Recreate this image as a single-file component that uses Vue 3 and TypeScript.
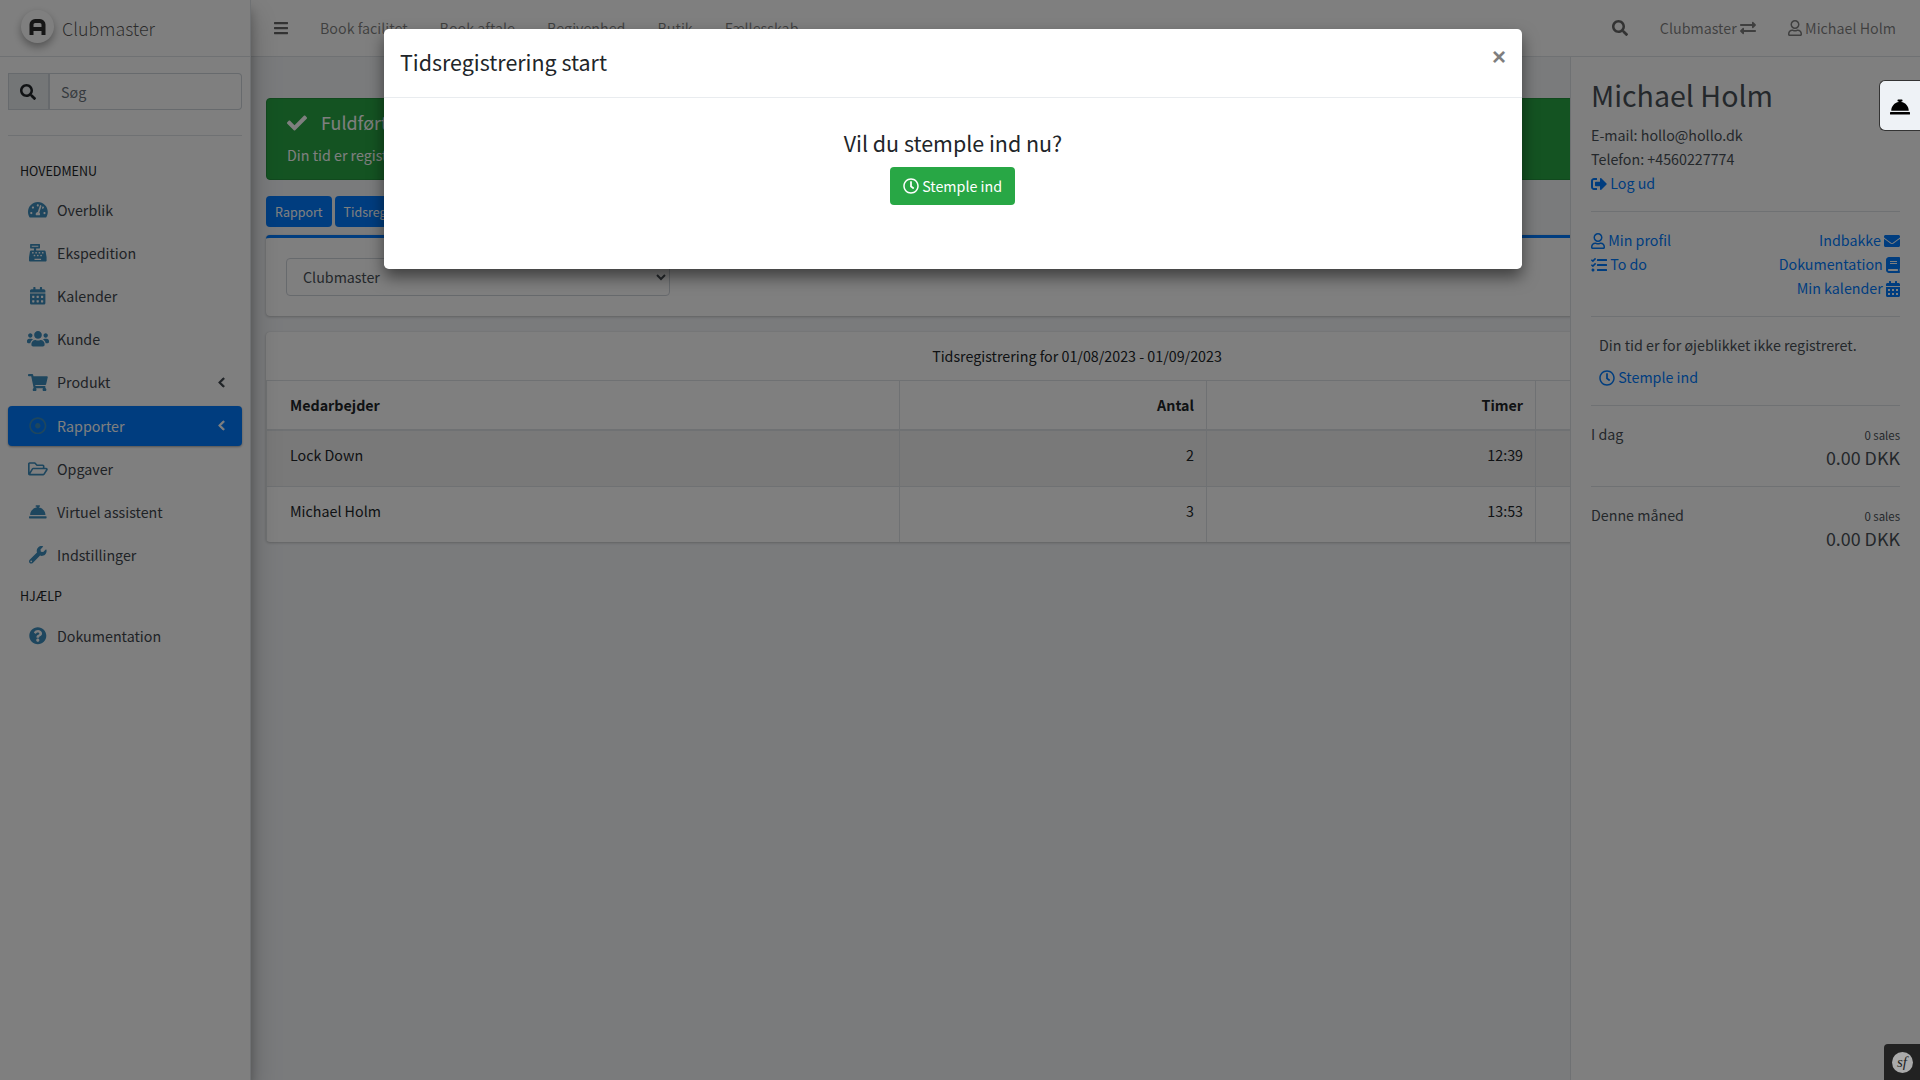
<script setup lang="ts">
import { h } from 'vue'

const I: Record<string, [number, string]> = {
  tach: [576, 'M288 32C128.94 32 0 160.94 0 320c0 52.8 14.25 102.26 39.06 144.8 5.61 9.62 16.3 15.2 27.44 15.2h443c11.14 0 21.83-5.58 27.44-15.2C561.75 422.26 576 372.8 576 320c0-159.06-128.94-288-288-288zm0 64c14.71 0 26.58 10.13 30.32 23.65-1.11 2.26-2.64 4.23-3.45 6.67l-9.22 27.67c-5.13 3.49-10.97 6.01-17.64 6.01-17.67 0-32-14.33-32-32S270.33 96 288 96zM96 384c-17.67 0-32-14.33-32-32s14.33-32 32-32 32 14.33 32 32-14.33 32-32 32zm48-160c-17.67 0-32-14.33-32-32s14.33-32 32-32 32 14.33 32 32-14.33 32-32 32zm246.77-72.41l-61.33 184C343.13 347.33 352 364.54 352 384c0 11.72-3.38 22.55-8.88 32H232.88c-5.5-9.45-8.88-20.28-8.88-32 0-33.94 26.5-61.43 59.9-63.59l61.34-184.01c4.17-12.56 17.73-19.45 30.36-15.17 12.57 4.19 19.35 17.79 15.17 30.36zm14.66 57.2l15.52-46.55c3.47-1.29 7.13-2.23 11.05-2.23 17.67 0 32 14.33 32 32s-14.33 32-32 32c-11.38-.01-20.89-6.28-26.57-15.22zM480 384c-17.67 0-32-14.33-32-32s14.33-32 32-32 32 14.33 32 32-14.33 32-32 32z'],
  cash: [512, 'M511.1 378.8l-26.7-160c-2.6-15.4-15.9-26.7-31.6-26.7H208v-64h96c8.8 0 16-7.2 16-16V16c0-8.8-7.2-16-16-16H48c-8.8 0-16 7.2-16 16v96c0 8.8 7.2 16 16 16h96v64H59.1c-15.6 0-29 11.3-31.6 26.7L.8 378.7c-.6 3.5-.9 7-.9 10.5V480c0 17.7 14.3 32 32 32h448c17.7 0 32-14.3 32-32v-90.7c.1-3.5-.2-7-.8-10.5zM280 248c0-8.8 7.2-16 16-16h16c8.8 0 16 7.2 16 16v16c0 8.8-7.2 16-16 16h-16c-8.8 0-16-7.2-16-16v-16zm-32 64h16c8.8 0 16 7.2 16 16v16c0 8.8-7.2 16-16 16h-16c-8.8 0-16-7.2-16-16v-16c0-8.8 7.2-16 16-16zm-32-80c8.8 0 16 7.2 16 16v16c0 8.8-7.2 16-16 16h-16c-8.8 0-16-7.2-16-16v-16c0-8.8 7.2-16 16-16h16zM80 80V48h192v32H80zm40 200h-16c-8.8 0-16-7.2-16-16v-16c0-8.8 7.2-16 16-16h16c8.8 0 16 7.2 16 16v16c0 8.8-7.2 16-16 16zm16 64v-16c0-8.8 7.2-16 16-16h16c8.8 0 16 7.2 16 16v16c0 8.8-7.2 16-16 16h-16c-8.8 0-16-7.2-16-16zm216 112c0 4.4-3.6 8-8 8H168c-4.4 0-8-3.6-8-8v-16c0-4.4 3.6-8 8-8h176c4.4 0 8 3.6 8 8v16zm24-112c0 8.8-7.2 16-16 16h-16c-8.8 0-16-7.2-16-16v-16c0-8.8 7.2-16 16-16h16c8.8 0 16 7.2 16 16v16zm48-80c0 8.8-7.2 16-16 16h-16c-8.8 0-16-7.2-16-16v-16c0-8.8 7.2-16 16-16h16c8.8 0 16 7.2 16 16v16z'],
  cal: [448, 'M0 464c0 26.5 21.5 48 48 48h352c26.5 0 48-21.5 48-48V192H0v272zm320-196c0-6.6 5.4-12 12-12h40c6.6 0 12 5.4 12 12v40c0 6.6-5.4 12-12 12h-40c-6.6 0-12-5.4-12-12v-40zm0 128c0-6.6 5.4-12 12-12h40c6.6 0 12 5.4 12 12v40c0 6.6-5.4 12-12 12h-40c-6.6 0-12-5.4-12-12v-40zM192 268c0-6.6 5.4-12 12-12h40c6.6 0 12 5.4 12 12v40c0 6.6-5.4 12-12 12h-40c-6.6 0-12-5.4-12-12v-40zm0 128c0-6.6 5.4-12 12-12h40c6.6 0 12 5.4 12 12v40c0 6.6-5.4 12-12 12h-40c-6.6 0-12-5.4-12-12v-40zM64 268c0-6.6 5.4-12 12-12h40c6.6 0 12 5.4 12 12v40c0 6.6-5.4 12-12 12H76c-6.6 0-12-5.4-12-12v-40zm0 128c0-6.6 5.4-12 12-12h40c6.6 0 12 5.4 12 12v40c0 6.6-5.4 12-12 12H76c-6.6 0-12-5.4-12-12v-40zM400 64h-48V16c0-8.8-7.2-16-16-16h-32c-8.8 0-16 7.2-16 16v48H160V16c0-8.8-7.2-16-16-16h-32c-8.8 0-16 7.2-16 16v48H48C21.5 64 0 85.5 0 112v48h448v-48c0-26.5-21.5-48-48-48z'],
  users: [640, 'M96 224c35.3 0 64-28.7 64-64s-28.7-64-64-64-64 28.7-64 64 28.7 64 64 64zm448 0c35.3 0 64-28.7 64-64s-28.7-64-64-64-64 28.7-64 64 28.7 64 64 64zm32 32h-64c-17.6 0-33.5 7.1-45.1 18.6 40.3 22.1 68.9 62 75.1 109.4h66c17.7 0 32-14.3 32-32v-32c0-35.3-28.7-64-64-64zm-256 0c61.9 0 112-50.1 112-112S381.9 32 320 32 208 82.1 208 144s50.1 112 112 112zm76.8 32h-8.3c-20.8 10-43.9 16-68.5 16s-47.6-6-68.5-16h-8.3C179.6 288 128 339.6 128 403.2V432c0 26.5 21.5 48 48 48h288c26.5 0 48-21.5 48-48v-28.8c0-63.6-51.6-115.2-115.2-115.2zm-223.7-13.4C161.5 263.1 145.6 256 128 256H64c-35.3 0-64 28.7-64 64v32c0 17.7 14.3 32 32 32h65.9c6.3-47.4 34.9-87.3 75.2-109.4z'],
  cart: [576, 'M528.12 301.319l47.273-208C578.806 78.301 567.391 64 551.99 64H159.208l-9.166-44.81C147.758 8.021 137.93 0 126.529 0H24C10.745 0 0 10.745 0 24v16c0 13.255 10.745 24 24 24h69.883l70.248 343.435C147.325 417.1 136 435.222 136 456c0 30.928 25.072 56 56 56s56-25.072 56-56c0-15.674-6.447-29.835-16.824-40h209.647C430.447 426.165 424 440.326 424 456c0 30.928 25.072 56 56 56s56-25.072 56-56c0-22.172-12.888-41.332-31.579-50.405l5.517-24.276c3.413-15.018-8.002-29.319-23.403-29.319H218.117l-6.545-32h293.145c11.206 0 20.92-7.754 23.403-18.681z'],
  dot: [512, 'M256 56c110.532 0 200 89.451 200 200 0 110.532-89.451 200-200 200-110.532 0-200-89.451-200-200 0-110.532 89.451-200 200-200m0-48C119.033 8 8 119.033 8 256s111.033 248 248 248 248-111.033 248-248S392.967 8 256 8zm0 168c-44.183 0-80 35.817-80 80s35.817 80 80 80 80-35.817 80-80-35.817-80-80-80z'],
  folder: [576, 'M527.9 224H480v-48c0-26.5-21.5-48-48-48H272l-64-64H48C21.5 64 0 85.5 0 112v288c0 26.5 21.5 48 48 48h400c16.5 0 31.9-8.5 40.7-22.6l79.9-128c20-31.9-3-73.4-40.7-73.4zM48 118c0-3.3 2.7-6 6-6h134.1l64 64H426c3.3 0 6 2.7 6 6v42H152c-16.8 0-32.4 8.8-41.1 23.2L48 351.4zm400 282H72l77.2-128H528z'],
  bell: [512, 'M288 130.54V112h16c8.84 0 16-7.16 16-16V80c0-8.84-7.16-16-16-16h-96c-8.84 0-16 7.16-16 16v16c0 8.84 7.16 16 16 16h16v18.54C115.49 146.11 32 239.18 32 352h448c0-112.82-83.49-205.89-192-221.46zM496 384H16c-8.84 0-16 7.16-16 16v32c0 8.84 7.16 16 16 16h480c8.84 0 16-7.16 16-16v-32c0-8.84-7.16-16-16-16z'],
  wrench: [512, 'M507.73 109.1c-2.24-9.03-13.54-12.09-20.12-5.51l-74.36 74.36-67.88-11.31-11.31-67.88 74.36-74.36c6.62-6.62 3.43-17.9-5.66-20.16-47.38-11.74-99.55.91-136.58 37.93-39.64 39.64-50.55 97.1-34.05 147.2L18.74 402.76c-24.99 24.99-24.99 65.51 0 90.5 24.99 24.99 65.51 24.99 90.5 0l213.21-213.21c50.12 16.71 107.47 5.68 147.37-34.22 37.07-37.07 49.7-89.32 37.91-136.73zM64 472c-13.25 0-24-10.75-24-24 0-13.26 10.75-24 24-24s24 10.74 24 24c0 13.25-10.75 24-24 24z'],
  help: [512, 'M504 256c0 136.997-111.043 248-248 248S8 392.997 8 256C8 119.083 119.043 8 256 8s248 111.083 248 248zM262.655 90c-54.497 0-89.255 22.957-116.549 63.758-3.536 5.286-2.353 12.415 2.715 16.258l34.699 26.31c5.205 3.947 12.621 3.008 16.665-2.122 17.864-22.658 30.113-35.797 57.303-35.797 20.429 0 45.698 13.148 45.698 32.958 0 14.976-12.363 22.667-32.534 33.976C247.128 238.528 216 254.941 216 296v4c0 6.627 5.373 12 12 12h56c6.627 0 12-5.373 12-12v-1.333c0-28.462 83.186-29.647 83.186-106.667 0-58.002-60.165-102-116.531-102zM256 338c-25.365 0-46 20.635-46 46 0 25.364 20.635 46 46 46s46-20.636 46-46c0-25.365-20.635-46-46-46z'],
  left: [320, 'M34.52 239.03L228.87 44.69c9.37-9.37 24.57-9.37 33.94 0l22.67 22.67c9.36 9.36 9.37 24.52.04 33.9L131.49 256l154.02 154.75c9.34 9.38 9.32 24.54-.04 33.9l-22.67 22.67c-9.37 9.37-24.57 9.37-33.94 0L34.52 272.97c-9.37-9.37-9.37-24.57 0-33.94z'],
  check: [512, 'M173.898 439.404l-166.4-166.4c-9.997-9.997-9.997-26.206 0-36.204l36.203-36.204c9.997-9.998 26.207-9.998 36.204 0L192 312.69 432.095 72.596c9.997-9.997 26.207-9.997 36.204 0l36.203 36.204c9.997 9.997 9.997 26.206 0 36.204l-294.4 294.401c-9.998 9.997-26.207 9.997-36.204-.001z'],
  search: [512, 'M505 442.7L405.3 343c-4.5-4.5-10.6-7-17-7H372c27.6-35.3 44-79.7 44-128C416 93.1 322.9 0 208 0S0 93.1 0 208s93.1 208 208 208c48.3 0 92.7-16.4 128-44v16.3c0 6.4 2.5 12.5 7 17l99.7 99.7c9.4 9.4 24.6 9.4 33.9 0l28.3-28.3c9.4-9.4 9.4-24.6.1-34zM208 336c-70.7 0-128-57.2-128-128 0-70.7 57.2-128 128-128 70.7 0 128 57.2 128 128 0 70.7-57.2 128-128 128z'],
  bars: [448, 'M16 132h416c8.837 0 16-7.163 16-16V76c0-8.837-7.163-16-16-16H16C7.163 60 0 67.163 0 76v40c0 8.837 7.163 16 16 16zm0 160h416c8.837 0 16-7.163 16-16v-40c0-8.837-7.163-16-16-16H16c-8.837 0-16 7.163-16 16v40c0 8.837 7.163 16 16 16zm0 160h416c8.837 0 16-7.163 16-16v-40c0-8.837-7.163-16-16-16H16c-8.837 0-16 7.163-16 16v40c0 8.837 7.163 16 16 16z'],
  swap: [512, 'M0 168v-16c0-13.255 10.745-24 24-24h360V80c0-21.367 25.899-32.042 40.971-16.971l80 80c9.372 9.373 9.372 24.569 0 33.941l-80 80C409.956 271.982 384 261.456 384 240v-48H24c-13.255 0-24-10.745-24-24zm488 152H128v-48c0-21.314-25.862-32.08-40.971-16.971l-80 80c-9.372 9.373-9.372 24.569 0 33.941l80 80C102.057 463.997 128 453.437 128 432v-48h360c13.255 0 24-10.745 24-24v-16c0-13.255-10.745-24-24-24z'],
  user: [448, 'M313.6 304c-28.7 0-42.5 16-89.6 16-47.1 0-60.8-16-89.6-16C60.2 304 0 364.2 0 438.4V464c0 26.5 21.5 48 48 48h352c26.5 0 48-21.5 48-48v-25.6c0-74.2-60.2-134.4-134.4-134.4zM400 464H48v-25.6c0-47.6 38.8-86.4 86.4-86.4 14.6 0 38.3 16 89.6 16 51.7 0 74.9-16 89.6-16 47.6 0 86.4 38.8 86.4 86.4V464zM224 288c79.5 0 144-64.5 144-144S303.5 0 224 0 80 64.5 80 144s64.5 144 144 144zm0-240c52.9 0 96 43.1 96 96s-43.1 96-96 96-96-43.1-96-96 43.1-96 96-96z'],
  out: [512, 'M497 273L329 441c-15 15-41 4.5-41-17v-96H152c-13.3 0-24-10.7-24-24v-96c0-13.3 10.7-24 24-24h136V88c0-21.4 25.9-32 41-17l168 168c9.3 9.4 9.3 24.6 0 34zM192 436v-40c0-6.6-5.4-12-12-12H96c-17.7 0-32-14.3-32-32V160c0-17.7 14.3-32 32-32h84c6.6 0 12-5.4 12-12V76c0-6.6-5.4-12-12-12H96c-53 0-96 43-96 96v192c0 53 43 96 96 96h84c6.6 0 12-5.4 12-12z'],
  mail: [512, 'M502.3 190.8c3.9-3.1 9.7-.2 9.7 4.7V400c0 26.5-21.5 48-48 48H48c-26.5 0-48-21.5-48-48V195.6c0-5 5.7-7.8 9.7-4.7 22.4 17.4 52.1 39.5 154.1 113.6 21.1 15.4 56.7 47.8 92.2 47.6 35.7.3 72-32.8 92.3-47.6 102-74.1 131.6-96.3 154-113.7zM256 320c23.2.4 56.6-29.2 73.4-41.4 132.7-96.3 142.8-104.7 173.4-128.7 5.8-4.5 9.2-11.5 9.2-18.9v-19c0-26.5-21.5-48-48-48H48C21.5 64 0 85.5 0 112v19c0 7.4 3.4 14.3 9.2 18.9 30.6 23.9 40.7 32.4 173.4 128.7 16.8 12.2 50.2 41.8 73.4 41.4z'],
  book: [448, 'M448 360V24c0-13.3-10.7-24-24-24H96C43 0 0 43 0 96v320c0 53 43 96 96 96h328c13.3 0 24-10.7 24-24v-16c0-7.5-3.5-14.3-8.9-18.7-4.2-15.4-4.2-59.3 0-74.7 5.4-4.3 8.9-11.1 8.9-18.6zM128 134c0-3.3 2.7-6 6-6h212c3.3 0 6 2.7 6 6v20c0 3.3-2.7 6-6 6H134c-3.3 0-6-2.7-6-6v-20zm0 64c0-3.3 2.7-6 6-6h212c3.3 0 6 2.7 6 6v20c0 3.3-2.7 6-6 6H134c-3.3 0-6-2.7-6-6v-20zm253.4 250H96c-17.7 0-32-14.3-32-32 0-17.6 14.4-32 32-32h285.4c-1.9 17.1-1.9 46.9 0 64z'],
  tasks: [512, 'M139.61 35.5a12 12 0 0 0-17 0L58.93 98.81l-22.7-22.12a12 12 0 0 0-17 0L3.53 92.41a12 12 0 0 0 0 17l47.59 47.4a12.78 12.78 0 0 0 17.61 0l15.59-15.62L156.52 69a12.09 12.09 0 0 0 .09-17zm0 159.19a12 12 0 0 0-17 0l-63.68 63.72-22.7-22.1a12 12 0 0 0-17 0L3.53 252a12 12 0 0 0 0 17L51 316.5a12.77 12.77 0 0 0 17.6 0l15.7-15.69 72.2-72.22a12 12 0 0 0 .09-16.9zM64 368c-26.49 0-48.59 21.5-48.59 48S37.53 464 64 464a48 48 0 0 0 0-96zm432 16H208a16 16 0 0 0-16 16v32a16 16 0 0 0 16 16h288a16 16 0 0 0 16-16v-32a16 16 0 0 0-16-16zm0-320H208a16 16 0 0 0-16 16v32a16 16 0 0 0 16 16h288a16 16 0 0 0 16-16V80a16 16 0 0 0-16-16zm0 160H208a16 16 0 0 0-16 16v32a16 16 0 0 0 16 16h288a16 16 0 0 0 16-16v-32a16 16 0 0 0-16-16z'],
  clock: [512, 'M256 8C119 8 8 119 8 256s111 248 248 248 248-111 248-248S393 8 256 8zm0 448c-110.5 0-200-89.5-200-200S145.5 56 256 56s200 89.5 200 200-89.5 200-200 200zm61.8-104.4l-84.9-61.7c-3.1-2.3-4.9-5.9-4.9-9.7V116c0-6.6 5.4-12 12-12h32c6.6 0 12 5.4 12 12v141.7l66.8 48.6c5.4 3.9 6.5 11.4 2.6 16.8L334.6 349c-3.9 5.3-11.4 6.5-16.8 2.6z'],
}

const Ic = (props: { n: string }) =>
  h('svg', { viewBox: `0 0 ${I[props.n][0]} 512`, fill: 'currentColor', class: 'ic' }, [h('path', { d: I[props.n][1] })])
Ic.props = ['n']

const mainMenu = [
  { label: 'Overblik', icon: 'tach' },
  { label: 'Ekspedition', icon: 'cash' },
  { label: 'Kalender', icon: 'cal' },
  { label: 'Kunde', icon: 'users' },
  { label: 'Produkt', icon: 'cart', arrow: true },
  { label: 'Rapporter', icon: 'dot', arrow: true, active: true },
  { label: 'Opgaver', icon: 'folder' },
  { label: 'Virtuel assistent', icon: 'bell' },
  { label: 'Indstillinger', icon: 'wrench' },
]
const topLinks = ['Book facilitet', 'Book aftale', 'Begivenhed', 'Butik', 'Fællesskab']
const rows = [
  { name: 'Lock Down', count: 2, hours: '12:39' },
  { name: 'Michael Holm', count: 3, hours: '13:53' },
]
const stats = ['I dag', 'Denne måned']
</script>

<template>
  <div class="page">
    <aside class="sidebar">
      <div class="brand">
        <span class="logo">
          <svg viewBox="0 0 20 20" width="17" height="16"><path d="M2.5 20V7a4.5 4.5 0 0 1 4.5-4.5h6A4.5 4.5 0 0 1 17.5 7v13M2.5 12.5h15" fill="none" stroke="#2c2c2c" stroke-width="5"/></svg>
        </span>
        <span class="brand-text">Clubmaster</span>
      </div>
      <div class="search">
        <span class="search-btn"><Ic n="search" /></span>
        <input class="search-input" placeholder="Søg" />
      </div>
      <nav class="menu">
        <div class="menu-head">HOVEDMENU</div>
        <a v-for="m in mainMenu" :key="m.label" class="item" :class="{ active: m.active }">
          <span class="item-ic"><Ic :n="m.icon" /></span>
          <span>{{ m.label }}</span>
          <span v-if="m.arrow" class="arrow"><Ic n="left" /></span>
        </a>
        <div class="menu-head">HJÆLP</div>
        <a class="item help"><span class="item-ic"><Ic n="help" /></span><span>Dokumentation</span></a>
      </nav>
    </aside>

    <div class="main">
      <header class="topbar">
        <span class="burger"><Ic n="bars" /></span>
        <a v-for="t in topLinks" :key="t" class="top-link">{{ t }}</a>
        <div class="top-right">
          <span class="top-search"><Ic n="search" /></span>
          <a class="top-club">Clubmaster <Ic n="swap" /></a>
          <a class="top-user"><Ic n="user" /> Michael Holm</a>
        </div>
      </header>

      <div class="below">
        <main class="content">
          <div class="content-inner">
            <div class="alert">
              <h5><Ic n="check" />Fuldført</h5>
              <p>Din tid er registreret</p>
            </div>
            <div class="tabs">
              <a class="tab">Rapport</a>
              <a class="tab">Tidsregistrering</a>
            </div>
            <section class="card filter">
              <select class="select"><option>Clubmaster</option></select>
            </section>
            <section class="card report">
              <div class="caption">Tidsregistrering for 01/08/2023 - 01/09/2023</div>
              <table>
                <colgroup>
                  <col class="c1" /><col class="c2" /><col class="c3" /><col />
                </colgroup>
                <thead>
                  <tr><th>Medarbejder</th><th class="num">Antal</th><th class="num">Timer</th><th></th></tr>
                </thead>
                <tbody>
                  <tr v-for="r in rows" :key="r.name">
                    <td>{{ r.name }}</td>
                    <td class="num">{{ r.count }}</td>
                    <td class="num">{{ r.hours }}</td>
                    <td></td>
                  </tr>
                </tbody>
              </table>
            </section>
          </div>
        </main>

        <aside class="panel">
          <h3 class="who">Michael Holm</h3>
          <div>E-mail: hollo@hollo.dk</div>
          <div>Telefon: +4560227774</div>
          <a class="link"><Ic n="out" /> Log ud</a>
          <hr />
          <div class="links">
            <div class="col">
              <a class="link"><Ic n="user" /> Min profil</a>
              <a class="link"><Ic n="tasks" /> To do</a>
            </div>
            <div class="col end">
              <a class="link">Indbakke <Ic n="mail" /></a>
              <a class="link">Dokumentation <Ic n="book" /></a>
              <a class="link">Min kalender <Ic n="cal" /></a>
            </div>
          </div>
          <hr />
          <div class="reg">
            <p>Din tid er for øjeblikket ikke registreret.</p>
            <a class="link"><Ic n="clock" /> Stemple ind</a>
          </div>
          <template v-for="s in stats" :key="s">
            <hr />
            <div class="stat">
              <div class="stat-top"><span>{{ s }}</span><small>0 sales</small></div>
              <div class="stat-val">0.00 DKK</div>
            </div>
          </template>
        </aside>
      </div>
    </div>

    <div class="backdrop"></div>
    <div class="modal-wrap">
      <div class="modal">
        <div class="modal-head">
          <h4>Tidsregistrering start</h4>
          <span class="close">×</span>
        </div>
        <div class="modal-body">
          <h4>Vil du stemple ind nu?</h4>
          <button class="btn-ok"><Ic n="clock" /> Stemple ind</button>
        </div>
      </div>
    </div>

    <div class="bell"><Ic n="bell" /></div>
    <div class="sf"><span class="sf-dot">sf</span></div>
  </div>
</template>

<style>
html, body { margin: 0; padding: 0; overflow: hidden; }
</style>

<style scoped>
.page {
  --k: 0.893;
  position: relative;
  width: 1920px;
  height: 1080px;
  overflow: hidden;
  display: flex;
  background: #f4f6f9;
  color: #212529;
  font-family: "Noto Sans CJK JP", "Noto Sans", sans-serif;
  font-size: calc(16px * var(--k));
  line-height: 24px;
}
.ic { height: calc(1em / var(--k)); width: auto; vertical-align: -0.15em; }
a { text-decoration: none; }

.sidebar {
  width: 250px;
  flex: none;
  background: #fff;
  box-shadow: 0 14px 28px rgba(0,0,0,.25), 0 10px 10px rgba(0,0,0,.22);
  position: relative;
  z-index: 2;
  border-right: 1px solid #dee2e6;
  box-sizing: content-box;
}
.brand {
  height: 56px;
  display: flex;
  align-items: center;
  border-bottom: 1px solid #dee2e6;
  padding-left: 21px;
  gap: 8px;
}
.logo {
  width: 33px;
  height: 33px;
  border-radius: 50%;
  background: #fff;
  display: flex;
  align-items: center;
  justify-content: center;
  box-shadow: 0 4px 8px rgba(0,0,0,.35);
  margin-top: -3px;
}
.brand-text { font-size: calc(20px * var(--k)); color: rgba(0,0,0,.68); font-weight: 300; }
.search {
  margin: 16px 8px 0;
  height: 37px;
  display: flex;
}
.search-btn {
  width: 42px;
  flex: none;
  background: #e9ecef;
  border: 1px solid #ced4da;
  border-right-width: 2px;
  padding-right: 1px;
  display: flex;
  align-items: center;
  justify-content: center;
  box-sizing: border-box;
  color: #212529;
}
.search-input {
  flex: 1;
  min-width: 0;
  border: 1px solid #ced4da;
  border-left: 0;
  border-radius: 0 4px 4px 0;
  padding: 0 11px;
  font: inherit;
  background: #fff;
  outline: none;
}
.search-input::placeholder { color: #6c757d; }
.menu {
  margin: 25px 8px 0;
  padding-top: 16.7px;
  border-top: 1px solid #dee2e6;
}
.menu-head {
  height: 37px;
  line-height: 36px;
  padding-left: 12px;
  font-size: calc(14px * var(--k));
  color: #212529;
}
.item {
  height: 40px;
  margin-bottom: 3.2px;
  display: flex;
  align-items: center;
  border-radius: 4px;
  color: #3f464d;
  padding-left: 16px;
  padding-right: 16px;
  position: relative;
}
.item.help { margin-top: 0.5px; }
.item-ic {
  width: 28px;
  margin-right: 5px;
  flex: none;
  color: #3c8dbc;
  display: flex;
  justify-content: center;
}
.item-ic .ic { height: 17.6px; }
.item.active {
  background: #007bff;
  color: #fff;
  box-shadow: 0 1px 3px rgba(0,0,0,.12), 0 1px 2px rgba(0,0,0,.24);
}
.arrow { margin-left: auto; display: flex; margin-right: 1px; }
.arrow .ic { height: 11px; stroke: currentColor; stroke-width: 36; }

.main { flex: 1; min-width: 0; display: flex; flex-direction: column; }
.topbar {
  height: 57px;
  box-sizing: border-box;
  flex: none;
  background: #fff;
  border-bottom: 1px solid #dee2e6;
  display: flex;
  align-items: center;
  color: rgba(0,0,0,.5);
}
.burger { width: 53px; flex: none; display: flex; padding-left: 23px; box-sizing: border-box; color: rgba(0,0,0,.6); }
.top-link { padding: 0 16px; color: rgba(0,0,0,.5); }
.top-right { margin-left: auto; display: flex; align-items: center; padding-right: 24px; }
.top-search { margin-right: 32px; display: flex; color: rgba(0,0,0,.6); }
.top-club { margin-right: 32px; color: rgba(0,0,0,.5); }
.top-user { color: rgba(0,0,0,.5); }

.below { flex: 1; min-height: 0; display: flex; }
.content { flex: 1; min-width: 0; overflow: hidden; }
.content-inner { width: 1622px; margin-left: 15px; padding-top: 41px; }

.alert {
  background: #28a745;
  color: #fff;
  border: 1px solid #23923d;
  border-radius: 4px;
  padding: 11px 20px 12px;
  height: 82px;
  box-sizing: border-box;
}
.alert h5 { margin: 0 0 9px; font-size: calc(20px * var(--k)); font-weight: 400; line-height: 24px; }
.alert h5 .ic { margin-right: 14px; height: 20px; vertical-align: -3px; }
.alert p { margin: 0; }

.tabs { display: flex; gap: 3px; margin-top: 16px; }
.tab {
  height: 31px;
  padding: 0 9px;
  line-height: 31px;
  font-size: calc(14px * var(--k));
  background: #007bff;
  color: #fff;
  border-radius: 4px;
}
.card {
  background: #fff;
  border-radius: 4px;
  box-shadow: 0 0 1px rgba(0,0,0,.125), 0 1px 3px rgba(0,0,0,.2);
}
.filter {
  margin-top: 8px;
  border-top: 3px solid #007bff;
  padding: 20px;
  height: 81px;
  box-sizing: border-box;
}
.select {
  width: 384px;
  height: 38px;
  padding: 5px 12px 6px;
  font: inherit;
  color: #495057;
  background: #fff;
  border: 1px solid #ced4da;
  border-radius: 4px;
}
.report { margin-top: 16px; }
.caption { height: 48px; line-height: 48px; text-align: center; }
table { border-collapse: collapse; width: 100%; table-layout: fixed; }
.c1 { width: 633px; }
.c2 { width: 307px; }
.c3 { width: 329px; }
th, td {
  border: 1px solid #dee2e6;
  padding: 12px;
  text-align: left;
  vertical-align: top;
}
th { height: 49px; box-sizing: border-box; border-bottom-width: 2px; font-weight: 700; }
td { height: 56px; box-sizing: border-box; }
tbody tr:first-child { background: rgba(0,0,0,.05); }
th:first-child, td:first-child { padding-left: 23px; }
th:last-child, td:last-child { border-right: 0; }
tbody tr:last-child td { border-bottom: 0; }
.num { text-align: right; }

.panel {
  width: 350px;
  flex: none;
  box-sizing: border-box;
  background: #fff;
  border-left: 1px solid #dee2e6;
  padding: 20px 20px 0;
  color: #495057;
  position: relative;
}
.who { margin: -1px 0 9px; font-size: calc(32px * var(--k)); line-height: 38.4px; font-weight: 400; }
.panel hr { margin: 16px 0; border: 0; border-top: 1px solid #dee2e6; }
.link { color: #007bff; display: block; }
.links { display: flex; justify-content: space-between; }
.end { text-align: right; }
.reg { padding-left: 8px; }
.reg p { margin: 0 0 8px; }
.stat-top { display: flex; justify-content: space-between; align-items: center; height: 24px; }
.stat-top small { font-size: calc(12.8px * var(--k)); line-height: 20px; padding-top: 2px; }
.stat-val { text-align: right; font-size: calc(20px * var(--k)); line-height: 23px; }
.stat { padding-bottom: 1px; }

.backdrop { position: absolute; inset: 0; background: rgba(0,0,0,.5); z-index: 5; }
.modal-wrap {
  position: absolute;
  inset: 0;
  z-index: 6;
  display: flex;
  justify-content: center;
  align-items: flex-start;
  padding: 29px 14px 0 0;
  box-sizing: border-box;
}
.modal {
  width: 1138px;
  height: 240px;
  background: #fff;
  border-radius: 4.8px;
  box-shadow: 0 8px 16px rgba(0,0,0,.5);
}
.modal h4 { margin: 0; font-size: calc(24px * var(--k)); line-height: 36px; font-weight: 400; }
.modal-head {
  height: 69px;
  box-sizing: border-box;
  padding: 15px 16px 0;
  border-bottom: 1px solid #e9ecef;
  display: flex;
  justify-content: space-between;
}
.close { font-size: 24px; font-weight: 700; color: #000; opacity: .5; line-height: 24px; margin-top: 1px; font-family: "Liberation Sans", sans-serif; }
.modal-body { text-align: center; padding-top: 27px; }
.btn-ok {
  margin-top: 6px;
  margin-right: 1px;
  height: 38px;
  width: 125px;
  border: 0;
  border-radius: 4px;
  background: #28a745;
  color: #fff;
  font: inherit;
}
.bell {
  position: absolute;
  z-index: 7;
  right: 0;
  top: 80px;
  width: 41px;
  height: 51px;
  box-sizing: border-box;
  background: #eef2f6;
  border: 1px solid #333;
  border-right: 0;
  border-radius: 6px 0 0 6px;
  padding-top: 3px;
  display: flex;
  align-items: center;
  justify-content: center;
  color: #000;
  font-size: calc(20px * var(--k));
}
.sf {
  position: absolute;
  z-index: 7;
  right: 0;
  bottom: 0;
  width: 36px;
  height: 36px;
  background: #222;
  border-top-left-radius: 4px;
  display: flex;
  align-items: center;
  justify-content: center;
}
.sf-dot {
  width: 21px;
  height: 21px;
  border-radius: 50%;
  background: #aaa;
  color: #222;
  font: italic 400 15px/20px "Liberation Serif", serif;
  text-align: center;
}
</style>
